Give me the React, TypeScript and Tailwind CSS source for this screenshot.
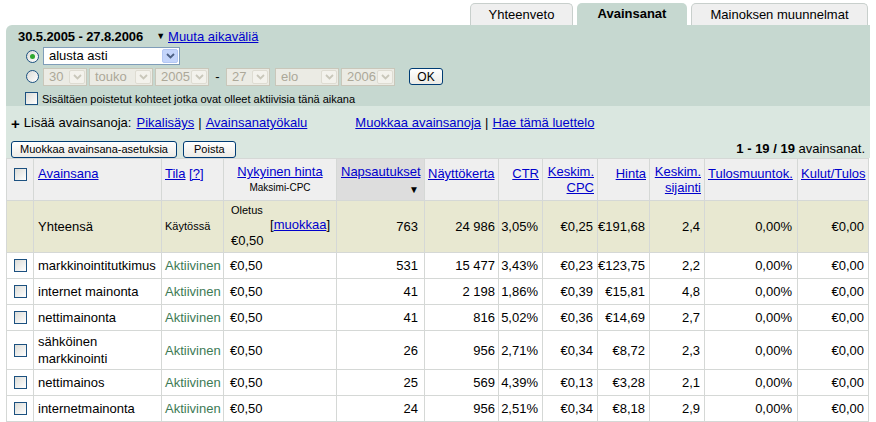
import React from "react";

type Row = {
  name: string;
  clicks: string;
  impr: string;
  ctr: string;
  cpc: string;
  cost: string;
  pos: string;
};

const rows: Array<Row> = [
  { name: "markkinointitutkimus", clicks: "531", impr: "15 477", ctr: "3,43%", cpc: "€0,23", cost: "€123,75", pos: "2,2" },
  { name: "internet mainonta", clicks: "41", impr: "2 198", ctr: "1,86%", cpc: "€0,39", cost: "€15,81", pos: "4,8" },
  { name: "nettimainonta", clicks: "41", impr: "816", ctr: "5,02%", cpc: "€0,36", cost: "€14,69", pos: "2,7" },
  { name: "sähköinen markkinointi", clicks: "26", impr: "956", ctr: "2,71%", cpc: "€0,34", cost: "€8,72", pos: "2,3" },
  { name: "nettimainos", clicks: "25", impr: "569", ctr: "4,39%", cpc: "€0,13", cost: "€3,28", pos: "2,1" },
  { name: "internetmainonta", clicks: "24", impr: "956", ctr: "2,51%", cpc: "€0,34", cost: "€8,18", pos: "2,9" },
];

function Chevron({ disabled }: { disabled?: boolean }) {
  return (
    <svg width="9" height="6" viewBox="0 0 9 6">
      <path
        d="M1 1 L4.5 4.5 L8 1"
        fill="none"
        stroke={disabled ? "#c9c7ba" : "#4d6185"}
        strokeWidth="1.8"
      />
    </svg>
  );
}

function Select({ value, width, disabled }: { value: string; width: string; disabled?: boolean }) {
  return (
    <div
      className={`${width} h-[18px] flex items-stretch border ${
        disabled ? "border-[#c9c7ba] bg-[#ebebe4] text-[#aca899]" : "border-[#7f9db9] bg-white text-black"
      }`}
    >
      <span className="flex-1 pl-[5px] text-[13px] leading-[16px] overflow-hidden whitespace-nowrap">{value}</span>
      <span
        className={`w-[16px] m-px flex items-center justify-center rounded-[2px] border ${
          disabled ? "bg-[#f3f2ec] border-[#dedcd2]" : "bg-[#c4d5fb] border-[#b3c7f4]"
        }`}
      >
        <Chevron disabled={disabled} />
      </span>
    </div>
  );
}

function Radio({ checked }: { checked?: boolean }) {
  return (
    <span className="w-[13px] h-[13px] rounded-full border border-[#1c5180] bg-gradient-to-br from-[#dcdcd7] to-white flex items-center justify-center shrink-0">
      {checked && <span className="w-[5px] h-[5px] rounded-full bg-[#2fa82f]" />}
    </span>
  );
}

function Check() {
  return (
    <span className="block w-[13px] h-[13px] border border-[#1c5180] bg-gradient-to-br from-[#dcdcd7] to-white shrink-0" />
  );
}

function XpButton({ children }: { children: React.ReactNode }) {
  return (
    <button className="h-[17px] px-[8px] border border-[#003c74] rounded-[3px] bg-gradient-to-b from-white to-[#ecebe6] text-[11px] leading-[14px] text-black">
      {children}
    </button>
  );
}

const link = "text-[#0000cc] underline";
const td = "border border-[#d5d8d6] align-middle";

export default function App() {
  return (
    <div className="w-[876px] h-[422px] overflow-hidden bg-white font-['Liberation_Sans',Arial,sans-serif] text-[13px] text-black">
      {/* tabs */}
      <div className="flex justify-end items-end h-[25px] pr-[8px] gap-[4px]">
        <div className="w-[103px] h-[22px] ml-auto border border-b-0 border-[#c8cfcc] rounded-t-[5px] bg-[#efefef] flex items-center justify-center">
          Yhteenveto
        </div>
        <div className="w-[110px] h-[22px] rounded-t-[5px] bg-[#c6d8d0] flex items-center justify-center font-bold">
          Avainsanat
        </div>
        <div className="w-[177px] h-[22px] border border-b-0 border-[#c8cfcc] rounded-t-[5px] bg-[#efefef] flex items-center justify-center">
          Mainoksen muunnelmat
        </div>
      </div>

      <div className="mx-[6px]">
        {/* date range panel */}
        <div className="h-[81px] bg-[#c6d8d0] rounded-tl-[6px] pl-[12px] pt-[4px]">
          <div className="flex items-center h-[15px]">
            <span className="font-bold text-[13px] tracking-[-0.1px]">30.5.2005 - 27.8.2006</span>
            <span className="ml-[13px] text-[9px] leading-none">▼</span>
            <span className={`${link} ml-[3px]`}>Muuta aikaväliä</span>
          </div>
          <div className="flex items-center gap-[4px] mt-[3px] pl-[8px]">
            <Radio checked />
            <Select value="alusta asti" width="w-[137px]" />
          </div>
          <div className="flex items-center mt-[2px] pl-[8px]">
            <Radio />
            <div className="flex items-center gap-[2px] ml-[4px]">
              <Select value="30" width="w-[44px]" disabled />
              <Select value="touko" width="w-[64px]" disabled />
              <Select value="2005" width="w-[54px]" disabled />
            </div>
            <span className="w-[17px] text-center text-[13px]">-</span>
            <div className="flex items-center gap-[2px]">
              <Select value="27" width="w-[44px]" disabled />
              <span className="w-px" />
              <Select value="elo" width="w-[64px]" disabled />
              <Select value="2006" width="w-[54px]" disabled />
            </div>
            <button className="ml-[14px] w-[34px] h-[17px] border border-[#003c74] rounded-[3px] bg-gradient-to-b from-white to-[#ecebe6] text-[12px] leading-[14px]">
              OK
            </button>
          </div>
          <div className="flex items-center gap-[4px] mt-[4px] pl-[7px]">
            <Check />
            <span className="text-[11px]">Sisältäen poistetut kohteet jotka ovat olleet aktiivisia tänä aikana</span>
          </div>
        </div>

        {/* actions panel */}
        <div className="bg-[#dae7e0] h-[52px] pl-[5px] pr-[5px]">
          <div className="flex items-center h-[34px]">
            <span className="font-bold text-[15px] leading-none mr-[4px]">+</span>
            <span>Lisää avainsanoja:</span>
            <span className={`${link} ml-[5px]`}>Pikalisäys</span>
            <span className="mx-[4px]">|</span>
            <span className={link}>Avainsanatyökalu</span>
            <span className={`${link} ml-[48px]`}>Muokkaa avainsanoja</span>
            <span className="mx-[4px]">|</span>
            <span className={link}>Hae tämä luettelo</span>
          </div>
          <div className="flex items-center gap-[6px] h-[18px]">
            <XpButton>Muokkaa avainsana-asetuksia</XpButton>
            <XpButton>
              <span className="px-[2px]">Poista</span>
            </XpButton>
            <span className="ml-auto">
              <b>1 - 19 / 19</b> avainsanat.
            </span>
          </div>
        </div>

        {/* table */}
        <table className="table-fixed border-collapse w-[862px]">
          <colgroup>
            {[27, 128, 62, 113, 88, 74, 44, 55, 52, 55, 93, 71].map((w, i) => (
              <col key={i} style={{ width: w }} />
            ))}
          </colgroup>
          <thead>
            <tr className="h-[42px] bg-[#efefef] align-top">
              <th className="border border-[#d5d8d6] pl-[7px] pt-[9px] font-normal text-left">
                <Check />
              </th>
              <th className="border border-[#d5d8d6] px-[4px] pt-[5px] font-normal text-left">
                <span className={link}>Avainsana</span>
              </th>
              <th className="border border-[#d5d8d6] px-[3px] pt-[5px] font-normal text-left">
                <span className={link}>Tila</span> <span className={link}>[?]</span>
              </th>
              <th className="border border-[#d5d8d6] px-[4px] pt-[5px] font-normal text-center leading-[16px]">
                <span className={link}>Nykyinen hinta</span>
                <div className="text-[10px] leading-[14px] mt-[1px]">Maksimi-CPC</div>
              </th>
              <th className="border border-[#d5d8d6] bg-[#dddddd] pl-[4px] pr-[5px] pt-[5px] font-normal text-left leading-[16px]">
                <span className={link}>Napsautukset</span>
                <div className="text-right text-[10px] leading-[16px] mt-[2px]">▼</div>
              </th>
              <th className="border border-[#d5d8d6] px-[3px] pt-[5px] font-normal text-left">
                <span className={link}>Näyttökerta</span>
              </th>
              <th className="border border-[#d5d8d6] px-[3px] pt-[5px] font-normal text-right">
                <span className={link}>CTR</span>
              </th>
              <th className="border border-[#d5d8d6] px-[3px] pt-[5px] font-normal text-right leading-[16px]">
                <span className={link}>
                  Keskim.
                  <br />
                  CPC
                </span>
              </th>
              <th className="border border-[#d5d8d6] px-[3px] pt-[5px] font-normal text-right">
                <span className={link}>Hinta</span>
              </th>
              <th className="border border-[#d5d8d6] px-[3px] pt-[5px] font-normal text-right leading-[16px]">
                <span className={link}>
                  Keskim.
                  <br />
                  sijainti
                </span>
              </th>
              <th className="border border-[#d5d8d6] px-[3px] pt-[5px] font-normal text-left">
                <span className={link}>Tulosmuuntok.</span>
              </th>
              <th className="border border-[#d5d8d6] px-[3px] pt-[5px] font-normal text-left">
                <span className={link}>Kulut/Tulos</span>
              </th>
            </tr>
          </thead>
          <tbody>
            <tr className="h-[52px] bg-[#e8e8d1]">
              <td className={td}></td>
              <td className={`${td} px-[4px]`}>Yhteensä</td>
              <td className={`${td} px-[3px] text-[11px]`}>Käytössä</td>
              <td className={`${td} pl-[7px] pr-[6px]`}>
                <div className="text-[11px] leading-[13px]">Oletus</div>
                <div className="text-right leading-[16px]">
                  [<span className={link}>muokkaa</span>]
                </div>
                <div className="leading-[16px]">€0,50</div>
              </td>
              <td className={`${td} text-right pr-[6px]`}>763</td>
              <td className={`${td} text-right pr-[3px]`}>24 986</td>
              <td className={`${td} text-right pr-[4px]`}>3,05%</td>
              <td className={`${td} text-right pr-[4px]`}>€0,25</td>
              <td className={`${td} text-right pr-[4px]`}>€191,68</td>
              <td className={`${td} text-right pr-[4px]`}>2,4</td>
              <td className={`${td} text-right pr-[5px]`}>0,00%</td>
              <td className={`${td} text-right pr-[4px]`}>€0,00</td>
            </tr>
            {rows.map((r) => (
              <tr key={r.name} className="h-[26px] bg-white leading-[17px]">
                <td className={`${td} pl-[7px]`}>
                  <Check />
                </td>
                <td className={`${td} px-[4px] py-[2px]`}>{r.name}</td>
                <td className={`${td} px-[3px] text-[#3d7a55]`}>Aktiivinen</td>
                <td className={`${td} px-[6px]`}>€0,50</td>
                <td className={`${td} text-right pr-[6px]`}>{r.clicks}</td>
                <td className={`${td} text-right pr-[3px]`}>{r.impr}</td>
                <td className={`${td} text-right pr-[4px]`}>{r.ctr}</td>
                <td className={`${td} text-right pr-[4px]`}>{r.cpc}</td>
                <td className={`${td} text-right pr-[4px]`}>{r.cost}</td>
                <td className={`${td} text-right pr-[4px]`}>{r.pos}</td>
                <td className={`${td} text-right pr-[5px]`}>0,00%</td>
                <td className={`${td} text-right pr-[4px]`}>€0,00</td>
              </tr>
            ))}
          </tbody>
        </table>
      </div>
    </div>
  );
}
